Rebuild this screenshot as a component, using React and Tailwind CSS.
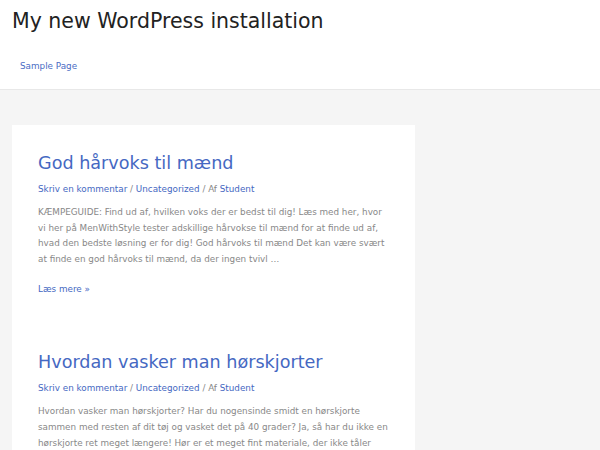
import React from 'react';

const posts = [
  {
    title: 'God hårvoks til mænd',
    excerpt:
      'KÆMPEGUIDE: Find ud af, hvilken voks der er bedst til dig! Læs med her, hvor vi her på MenWithStyle tester adskillige hårvokse til mænd for at finde ud af, hvad den bedste løsning er for dig! God hårvoks til mænd Det kan være svært at finde en god hårvoks til mænd, da der ingen tvivl …',
  },
  {
    title: 'Hvordan vasker man hørskjorter',
    excerpt:
      'Hvordan vasker man hørskjorter? Har du nogensinde smidt en hørskjorte sammen med resten af dit tøj og vasket det på 40 grader? Ja, så har du ikke en hørskjorte ret meget længere! Hør er et meget fint materiale, der ikke tåler meget, så det er vigtigt at vaske det rigtigt …',
  },
];

function Post({ post }) {
  return (
    <article className="pb-[53px]">
      <h2 className="text-[17.6px] leading-[26px] text-[#4568c2]">{post.title}</h2>
      <div className="mt-[6px] text-[8.8px] leading-[14px] text-[#888]">
        <a className="text-[#4568c2]">Skriv en kommentar</a> /{' '}
        <a className="text-[#4568c2]">Uncategorized</a> / Af{' '}
        <a className="text-[#4568c2]">Student</a>
      </div>
      <p className="mt-[9px] text-[8.8px] leading-[15.6px] text-[#888]">{post.excerpt}</p>
      <a className="mt-[15px] block text-[8.8px] leading-[14px] text-[#4568c2]">Læs mere »</a>
    </article>
  );
}

export default function App() {
  return (
    <div
      className="min-h-[450px] bg-[#f5f5f5]"
      style={{ fontFamily: '"DejaVu Sans", sans-serif' }}
    >
      {/* Header */}
      <header className="h-[90px] border-b border-[#e8e8e8] bg-white px-3">
        <div className="pt-[8px] text-[20.5px] leading-[26px] text-[#222]">My new WordPress installation</div>
        <nav className="mt-[25px] px-2 text-[8.8px] leading-[14px] text-[#4a6cc4]">Sample Page</nav>
      </header>

      {/* Content */}
      <main className="pt-[35px] pl-3">
        <div className="w-[403px] bg-white px-[26px] pt-[25px]">
          {posts.map((p) => (
            <Post key={p.title} post={p} />
          ))}
        </div>
      </main>
    </div>
  );
}
